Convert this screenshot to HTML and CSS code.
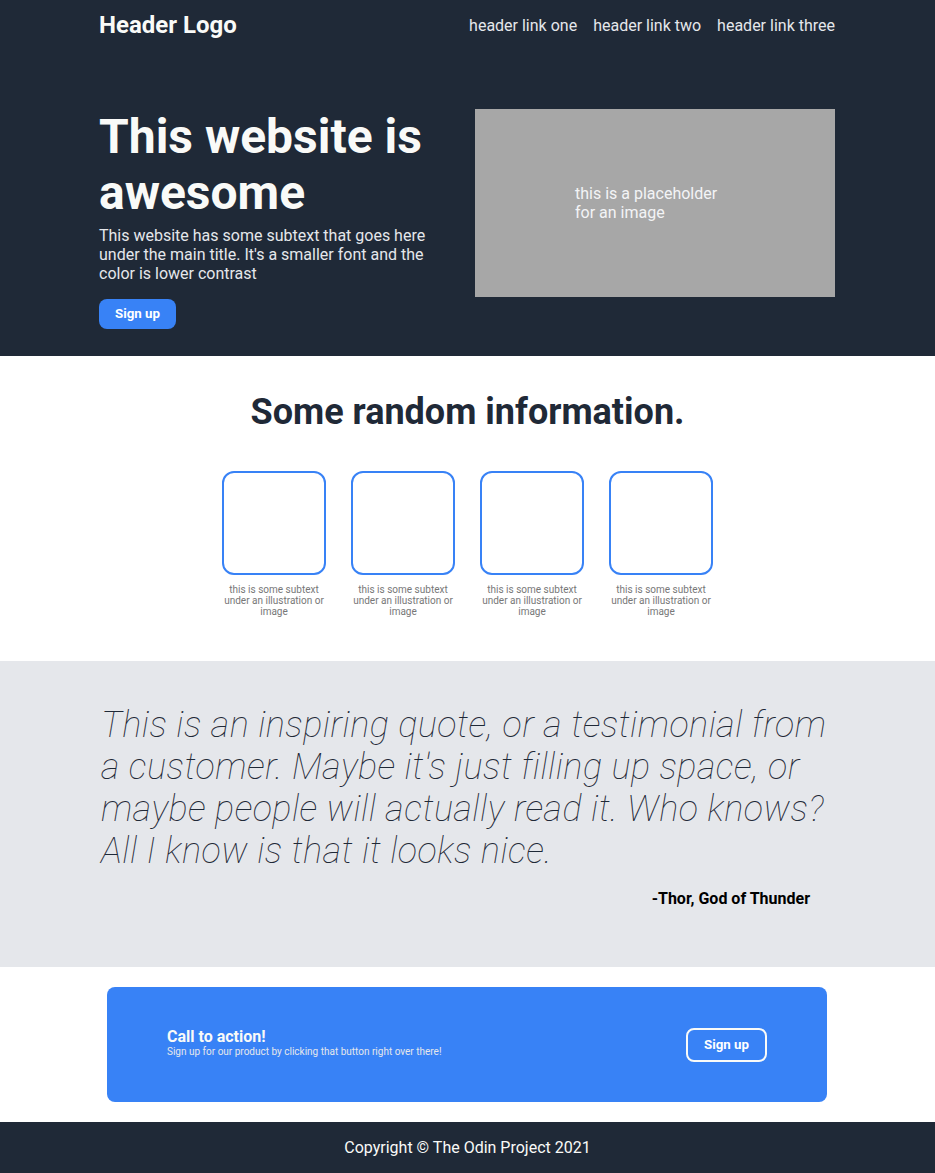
FILE: index.html
```html
<!DOCTYPE html>
<html lang="en">
<head>
<meta charset="utf-8">
<title>Landing Page</title>
<link rel="stylesheet" href="styles.css">
</head>
<body>
<div class="top">
  <header class="container header">
    <div class="logo">Header Logo</div>
    <nav class="links">
      <a href="#">header link one</a>
      <a href="#">header link two</a>
      <a href="#">header link three</a>
    </nav>
  </header>
  <section class="container hero">
    <div class="hero-text">
      <h1 class="hero-title">This website is awesome</h1>
      <p class="hero-sub">This website has some subtext that goes here under the main title. It's a smaller font and the color is lower contrast</p>
      <button class="btn">Sign up</button>
    </div>
    <div class="placeholder">
      <span class="placeholder-text">this is a placeholder for an image</span>
    </div>
  </section>
</div>

<section class="info">
  <h2 class="info-title">Some random information.</h2>
  <div class="cards">
    <div class="card"><div class="card-box"></div><p class="card-text">this is some subtext under an illustration or image</p></div>
    <div class="card"><div class="card-box"></div><p class="card-text">this is some subtext under an illustration or image</p></div>
    <div class="card"><div class="card-box"></div><p class="card-text">this is some subtext under an illustration or image</p></div>
    <div class="card"><div class="card-box"></div><p class="card-text">this is some subtext under an illustration or image</p></div>
  </div>
</section>

<section class="quote-section">
  <div class="container">
    <p class="quote">This is an inspiring quote, or a testimonial from a customer. Maybe it's just filling up space, or maybe people will actually read it. Who knows? All I know is that it looks nice.</p>
    <p class="author">-Thor, God of Thunder</p>
  </div>
</section>

<section class="cta-section">
  <div class="cta">
    <div class="cta-text">
      <div class="cta-title">Call to action!</div>
      <div class="cta-sub">Sign up for our product by clicking that button right over there!</div>
    </div>
    <button class="btn btn-outline">Sign up</button>
  </div>
</section>

<footer class="footer">Copyright © The Odin Project 2021</footer>
</body>
</html>
```
FILE: styles.css
```css
* { box-sizing: border-box; }

body {
  margin: 0;
  font-family: Roboto, "Liberation Sans", sans-serif;
  color: #000;
  background: #fff;
}

p, h1, h2 { margin: 0; }

.container {
  width: 737px;
  padding-right: 1px;
  margin: 0 auto;
}

.top {
  background: #1f2937;
  padding-bottom: 27px;
}

.header {
  height: 50px;
  display: flex;
  align-items: center;
  justify-content: space-between;
}

.logo {
  color: #f9faf8;
  font-size: 24px;
  font-weight: 700;
}

.links {
  display: flex;
  gap: 16px;
}

.links a {
  color: #e5e7eb;
  text-decoration: none;
  font-size: 16px;
}

.hero {
  margin-top: 59px;
  display: flex;
  justify-content: space-between;
  align-items: flex-start;
}

.hero-text {
  width: 360px;
}

.hero-title {
  color: #f9faf8;
  font-size: 48px;
  font-weight: 700;
  line-height: 56px;
  margin-bottom: 5px;
}

.hero-sub {
  color: #e5e7eb;
  font-size: 16px;
  line-height: 19px;
  margin-bottom: 16px;
}

.btn {
  font-family: inherit;
  background: #3882f6;
  color: #fff;
  border: none;
  border-radius: 8px;
  font-size: 13.3px;
  font-weight: 700;
  line-height: 16px;
  padding: 7px 16px;
  cursor: pointer;
}

.placeholder {
  width: 360px;
  height: 188px;
  background: #a7a7a7;
  display: flex;
  align-items: center;
  justify-content: center;
}

.placeholder-text {
  width: 160px;
  color: #f3f4f6;
  font-size: 16px;
  line-height: 19px;
}

.info {
  padding: 35px 0 44px;
  text-align: center;
}

.info-title {
  color: #1f2937;
  font-size: 36px;
  font-weight: 700;
  line-height: 42px;
  margin-bottom: 38px;
}

.cards {
  display: flex;
  justify-content: center;
  gap: 25px;
}

.card {
  width: 104px;
}

.card-box {
  width: 104px;
  height: 104px;
  border: 2px solid #3882f6;
  border-radius: 12px;
  margin-bottom: 9px;
}

.card-text {
  color: #777;
  font-size: 10px;
  line-height: 11px;
}

.quote-section {
  background: #e5e7eb;
  padding: 43px 0 59px;
}

.quote {
  color: #1f2937;
  font-size: 36px;
  font-style: italic;
  font-weight: 100;
  line-height: 42px;
  letter-spacing: 0.45px;
  padding-left: 2px;
}

.author {
  margin-top: 17px;
  text-align: right;
  padding-right: 25px;
  font-size: 16px;
  font-weight: 700;
  line-height: 19px;
}

.cta-section {
  padding: 20px 1px 20px 0;
}

.cta {
  width: 720px;
  height: 115px;
  margin: 0 auto;
  background: #3882f6;
  border-radius: 8px;
  display: flex;
  align-items: center;
  justify-content: space-between;
  padding: 0 60px;
}

.cta-text {
  color: #f9faf8;
  padding-bottom: 5px;
}

.cta-title {
  font-size: 16px;
  font-weight: 700;
  line-height: 19px;
}

.cta-sub {
  font-size: 10px;
  line-height: 12px;
  color: #e5e7eb;
}

.btn-outline {
  border: 2px solid #f9faf8;
  padding: 7px 16px;
}

.footer {
  background: #1f2937;
  color: #f9faf8;
  text-align: center;
  font-size: 16px;
  line-height: 19px;
  padding: 16px 0;
}
```
